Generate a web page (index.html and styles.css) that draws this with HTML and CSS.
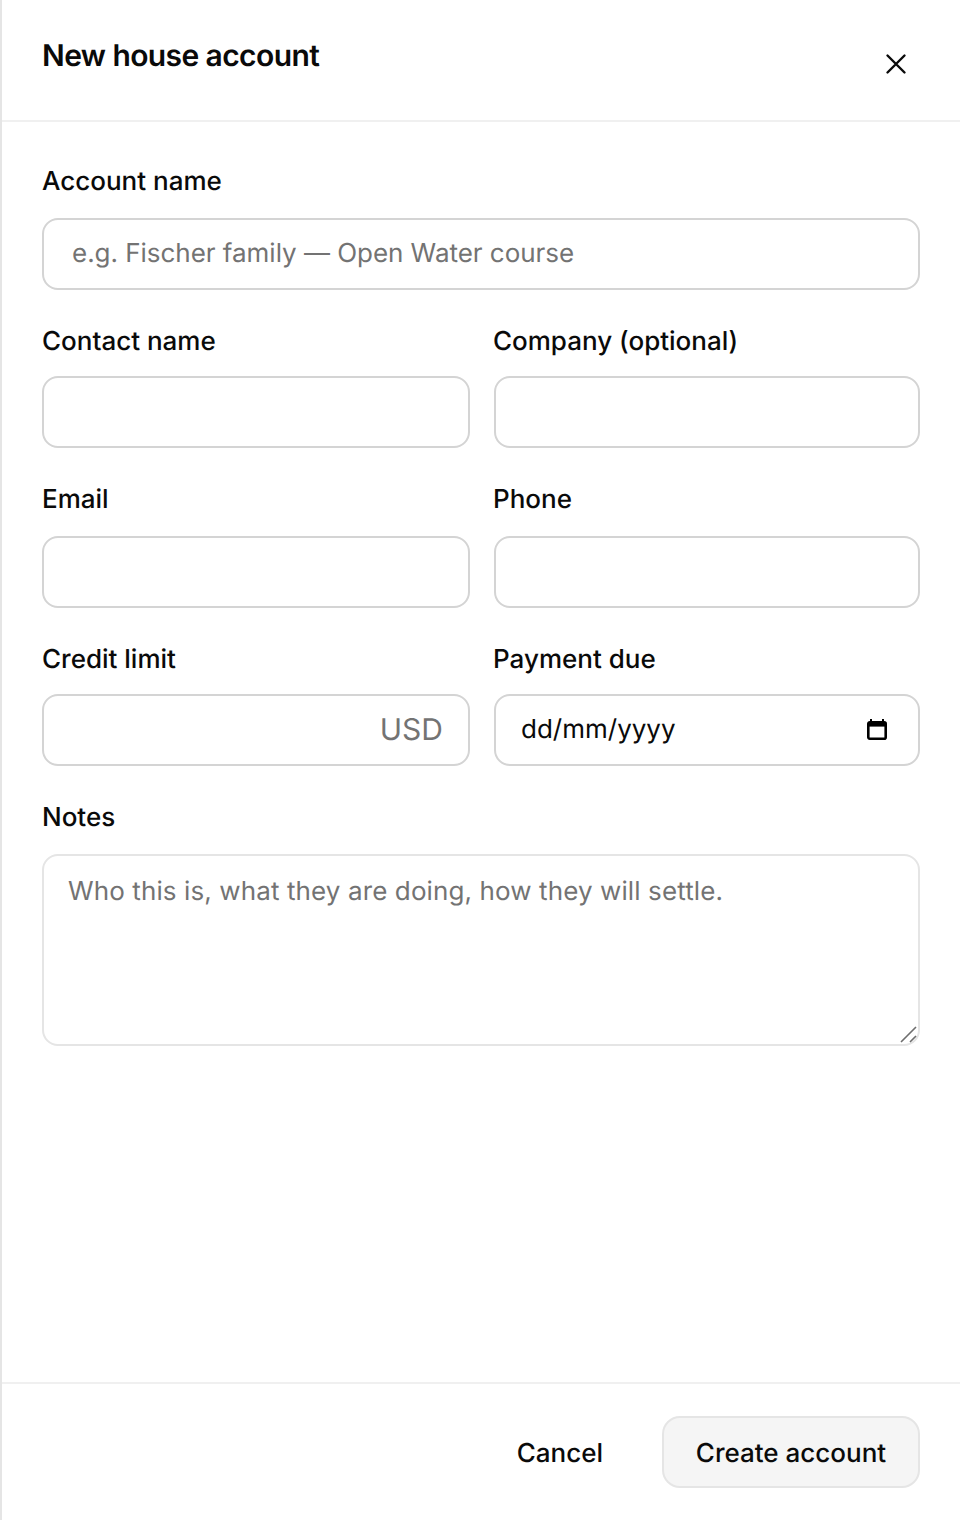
FILE: index.html
```html
<!DOCTYPE html>
<html lang="en">
<head>
    <meta charset="UTF-8">
    <meta name="viewport" content="width=device-width, initial-scale=1.0">
    <title>New house account</title>
    <link rel="stylesheet" href="styles.css">
</head>
<body>
    <div class="panel">
        <header class="panel-header">
            <h1>New house account</h1>
            <button class="close-btn" aria-label="Close">
                <svg width="24" height="24" viewBox="0 0 24 24" fill="none" stroke="#0a0a0a" stroke-width="2.4" stroke-linecap="round">
                    <path d="M3.5 3.5l17 17M20.5 3.5l-17 17"/>
                </svg>
            </button>
        </header>

        <form class="panel-body">
            <div class="field field-first">
                <label for="accountName">Account name</label>
                <input class="input input-name" id="accountName" type="text" placeholder="e.g. Fischer family — Open Water course">
            </div>
            <div class="row row-tight">
                <div class="field">
                    <label for="contactName">Contact name</label>
                    <input class="input" id="contactName" type="text">
                </div>
                <div class="field field-right">
                    <label for="company">Company (optional)</label>
                    <input class="input" id="company" type="text">
                </div>
            </div>
            <div class="row">
                <div class="field">
                    <label for="email">Email</label>
                    <input class="input" id="email" type="email">
                </div>
                <div class="field field-right">
                    <label for="phone">Phone</label>
                    <input class="input" id="phone" type="tel">
                </div>
            </div>
            <div class="row row-tight">
                <div class="field">
                    <label for="creditLimit">Credit limit</label>
                    <div class="input-wrap">
                        <input class="input" id="creditLimit" type="text">
                        <span class="suffix">USD</span>
                    </div>
                </div>
                <div class="field field-right">
                    <label for="paymentDue">Payment due</label>
                    <div class="input-wrap">
                        <input class="input input-date" id="paymentDue" type="text" value="dd/mm/yyyy">
                        <svg class="calendar" width="22" height="22" viewBox="0 0 22 22" fill="none" stroke="#000" stroke-width="2.6">
                            <rect x="2.3" y="3.3" width="17.4" height="16.4" rx="1.5"/>
                            <path d="M2 5.6h18" stroke-width="4"/>
                            <path d="M5 0v3M17 0v3" stroke-width="2"/>
                        </svg>
                    </div>
                </div>
            </div>
            <div class="field field-notes">
                <label for="notes">Notes</label>
                <div class="input-wrap">
                    <textarea class="input textarea" id="notes" placeholder="Who this is, what they are doing, how they will settle."></textarea>
                    <svg class="resizer" width="18" height="18" viewBox="0 0 18 18" stroke="#6e6e6e" stroke-width="1.6">
                        <path d="M1 16L16 1M10 16l6-6"/>
                    </svg>
                </div>
            </div>
        </form>

        <footer class="panel-footer">
            <button class="btn btn-ghost">Cancel</button>
            <button class="btn btn-primary">Create account</button>
        </footer>
    </div>
</body>
</html>
```

FILE: styles.css
```css
* {
    box-sizing: border-box;
}
body {
    margin: 0;
    background-color: #fff;
    color: #0a0a0a;
    font-family: Inter, "Liberation Sans", sans-serif;
    text-rendering: geometricPrecision;
}
.panel {
    display: flex;
    flex-direction: column;
    height: 1520px;
    border-left: 2px solid #e5e5e5;
}
.panel-header {
    display: flex;
    justify-content: space-between;
    height: 122px;
    padding: 38px 40px 0;
    border-bottom: 2px solid #f0f0f0;
}
h1 {
    margin: 0;
    font-size: 30px;
    line-height: 36px;
    font-weight: 600;
    letter-spacing: -0.6px;
}
.close-btn {
    width: 24px;
    height: 24px;
    margin: 14px 12px 0 0;
    padding: 0;
    border: none;
    background: none;
}
.panel-body {
    flex: 1;
    padding: 0 40px;
}
.row {
    display: grid;
    grid-template-columns: 428px 426px;
    gap: 24px;
    margin-top: 34px;
}
.field-first {
    margin-top: 42px;
}
.field-notes {
    margin-top: 34px;
}
label {
    display: block;
    margin-bottom: 18px;
    font-size: 26px;
    line-height: 36px;
    font-weight: 500;
}
.row-tight label {
    margin-bottom: 16px;
}
.field-right label {
    margin-left: -1px;
}
.input-wrap {
    position: relative;
}
.input {
    display: block;
    width: 100%;
    height: 72px;
    padding: 0 26px 2px;
    border: 2px solid #d4d4d4;
    border-radius: 16px;
    background: #fff;
    color: #0a0a0a;
    font-family: inherit;
    font-size: 26px;
    text-rendering: geometricPrecision;
    outline: none;
}
.input::placeholder {
    color: #737373;
    opacity: 1;
}
.input-name {
    padding-left: 28px;
    letter-spacing: -0.03px;
}
.input-date {
    padding-left: 25px;
}
.suffix {
    position: absolute;
    top: 0;
    right: 27px;
    font-size: 30px;
    line-height: 72px;
    color: #737373;
}
.calendar {
    position: absolute;
    top: 25px;
    right: 32px;
}
.textarea {
    height: 192px;
    padding: 17px 24px;
    border-color: #e5e5e5;
    line-height: 38px;
    letter-spacing: 0.11px;
    resize: none;
}
.resizer {
    position: absolute;
    right: 2px;
    bottom: 2px;
}
.panel-footer {
    display: flex;
    justify-content: flex-end;
    align-items: center;
    gap: 24px;
    height: 138px;
    padding: 0 40px;
    border-top: 2px solid #f0f0f0;
}
.btn {
    height: 72px;
    padding-top: 4px;
    border-radius: 18px;
    font-family: inherit;
    font-size: 26px;
    font-weight: 500;
    color: #0a0a0a;
    text-rendering: geometricPrecision;
}
.btn-ghost {
    padding-right: 35px;
    padding-left: 34px;
    border: none;
    background: none;
}
.btn-primary {
    width: 258px;
    border: 2px solid #e5e5e5;
    background: #f5f5f5;
}
```
